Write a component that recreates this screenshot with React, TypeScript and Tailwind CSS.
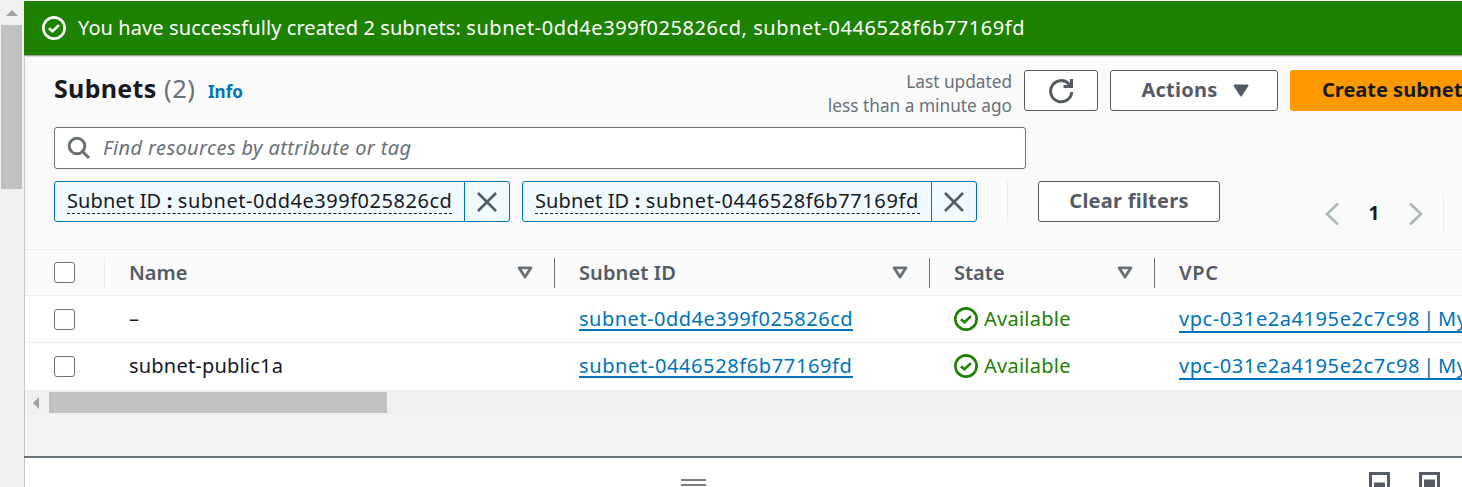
import React from "react";

function StatusOk({ className }: { className: string }) {
  return (
    <svg className={className} width="24" height="24" viewBox="0 0 16 16" fill="none" stroke="currentColor" strokeWidth="1.75">
      <circle cx="8" cy="8" r="7.1" />
      <path d="M4.6 8.1 7 10.2l4.3-4.1" />
    </svg>
  );
}

function Checkbox() {
  return <span className="block h-[21px] w-[21px] shrink-0 rounded-[3px] border border-[#687078] bg-white" />;
}

function Token({ label, value, className, valueClass }: { label: string; value: string; className: string; valueClass: string }) {
  return (
    <div className={`flex h-[41px] shrink-0 rounded-[3px] border border-[#0073bb] bg-[#f1faff] ${className}`}>
      <div className="flex-1 pl-3">
        <span className="mt-[5px] inline-block h-[27px] w-[385px] border-b border-dashed border-[#16191f] text-[20px] leading-[28px] tracking-[0.14px] whitespace-nowrap">
          {label} <b>:</b> <span className={valueClass}>{value}</span>
        </span>
      </div>
      <div className="flex w-[45px] items-center justify-center border-l border-[#0073bb] text-[#545b64]">
        <svg width="20" height="20" viewBox="0 0 20 20" stroke="currentColor" strokeWidth="2.6">
          <path d="m1 1 18 18M19 1 1 19" />
        </svg>
      </div>
    </div>
  );
}

function HeaderCell({ title, className, sortable = true }: { title: string; className: string; sortable?: boolean }) {
  return (
    <div className={`flex h-[30px] shrink-0 items-center text-[20px] font-semibold text-[#545b64] ${className}`}>
      <span className="flex-1">{title}</span>
      {sortable && (
        <svg className="mr-[21px]" width="16" height="13" viewBox="0 0 16 13" fill="none" stroke="#687078" strokeWidth="2.8" strokeLinejoin="round">
          <path d="M2 1.800h12L8 11Z" />
        </svg>
      )}
    </div>
  );
}

function Row({ name, id, className, idClass }: { name: string; id: string; className: string; idClass: string }) {
  return (
    <div className={`flex h-[47px] shrink-0 items-center bg-white pl-[29px] text-[20px] ${className}`}>
      <Checkbox />
      <span className="ml-[54px] w-[450px] shrink-0 tracking-[0.2px]">{name}</span>
      <span className="w-[375px] shrink-0">
        <a className={`inline-block h-[24px] border-b-2 border-[#0073bb] leading-[24px] text-[#0073bb] ${idClass}`}>{id}</a>
      </span>
      <span className="flex w-[225px] shrink-0 items-center gap-[6px] tracking-[0.25px] text-[#1d8102]">
        <StatusOk className="shrink-0" />
        Available
      </span>
      <a className="mt-[2px] inline-block h-[26px] border-b-2 border-[#0073bb] leading-[23px] tracking-[0.58px] whitespace-nowrap text-[#0073bb] [word-spacing:-2.5px]">
        vpc-031e2a4195e2c7c98 | My
      </a>
    </div>
  );
}

const button = "flex h-[41px] shrink-0 items-center justify-center rounded-[3px] border border-[#545b64] bg-white pb-[2px] text-[20px] font-bold tracking-[0.25px] text-[#545b64]";

export default function App() {
  return (
    <div className="flex h-[487px] w-[1462px] overflow-hidden bg-[#f0f0f0] font-['Noto_Sans',sans-serif] text-[#16191f]">
      <div className="w-6 shrink-0 pt-[10px]">
        <svg className="ml-[6px] block" width="12" height="6" viewBox="0 0 12 6">
          <path d="M0 6 6 0l6 6Z" fill="#a3a3a3" />
        </svg>
        <div className="mt-[9px] ml-px h-[164px] w-[21px] bg-[#c1c1c1]" />
      </div>

      <div className="flex w-[1438px] shrink-0 flex-col bg-[#fafafa] pt-px">
        <div className="flex h-[54px] shrink-0 items-center bg-[#1d8102] pl-[18px] text-[20px] text-white">
          <StatusOk className="shrink-0" />
          <span className="ml-3 tracking-[0.09px] whitespace-nowrap">
            You have successfully created 2 subnets:{" "}
            <span className="tracking-[0.55px]">subnet-0dd4e399f025826cd, subnet-0446528f6b77169fd</span>
          </span>
        </div>
        <div className="h-[2px] shrink-0 border-b border-[#dfe1e2] bg-[#9b9fa3]" />

        <div className="flex h-[399px] shrink-0 flex-col border-l border-[#c3c9cb]">
          <div className="flex h-[192px] shrink-0 flex-col pt-[13px] pl-[29px]">
            <div className="flex h-[41px] shrink-0">
              <h1 className="w-[110px] text-[25px] leading-[36px] font-bold tracking-[0.3px]">Subnets</h1>
              <span className="w-11 text-[25.500px] leading-[36px] tracking-[0.5px] text-[#687078]">(2)</span>
              <a className="text-[17px] leading-[43px] font-bold text-[#0073bb]">Info</a>
              <div className="ml-auto shrink-0 text-right text-[17.250px] leading-6 whitespace-nowrap text-[#687078]">
                Last updated
                <br />
                less than a minute ago
              </div>
              <div className={`${button} ml-3 w-[74px]`}>
                <svg className="mt-[2px]" width="26" height="26" viewBox="0 0 26 26" fill="none" stroke="currentColor" strokeWidth="3">
                  <path d="M23.800 14A10.600 10.600 0 1 1 20.600 5.600L23 8" />
                  <path d="M23.500 1v7.500h-8" />
                </svg>
              </div>
              <div className={`${button} ml-3 w-[168px] gap-[15px] pl-[2px]`}>
                <span>Actions</span>
                <svg className="mt-[2px]" width="16" height="13" viewBox="0 0 16 13">
                  <path d="M1.500 1.500h13L8 11.500Z" fill="currentColor" stroke="currentColor" strokeWidth="2" strokeLinejoin="round" />
                </svg>
              </div>
              <div className="ml-3 h-[41px] w-[172px] shrink-0 overflow-hidden rounded-l-[3px] bg-[#ff9900] pl-8 text-[20px] leading-[39px] font-bold whitespace-nowrap">
                Create subnet
              </div>
            </div>

            <div className="mt-4 flex h-[42px] w-[972px] shrink-0 items-center rounded-[3px] border border-[#687078] bg-white pl-3">
              <svg width="24" height="24" viewBox="0 0 24 24" fill="none" stroke="#687078" strokeWidth="3">
                <circle cx="10" cy="10" r="7.8" />
                <path d="m15.500 15.500 6.500 6.500" />
              </svg>
              <span className="ml-3 text-[20px] tracking-[0.4px] text-[#687078] italic">Find resources by attribute or tag</span>
            </div>

            <div className="mt-3 flex shrink-0">
              <Token label="Subnet ID" value="subnet-0dd4e399f025826cd" className="w-[456px]" valueClass="tracking-[0.52px]" />
              <Token label="Subnet ID" value="subnet-0446528f6b77169fd" className="ml-3 w-[455px]" valueClass="tracking-[0.6px]" />
              <div className="ml-[30px] h-[41px] w-px bg-[#eaeded]" />
              <div className={`${button} ml-[30px] w-[182px]`}>Clear filters</div>
              <div className="mt-3 ml-[105px] flex h-[41px] items-center">
                <svg width="14" height="24" viewBox="0 0 14 24" fill="none" stroke="#aab7b8" strokeWidth="2.6">
                  <path d="M13 1.500 2 12l11 10.500" />
                </svg>
                <span className="w-[70px] text-center text-[19px] font-bold">1</span>
                <svg width="14" height="24" viewBox="0 0 14 24" fill="none" stroke="#aab7b8" strokeWidth="2.6">
                  <path d="M1 1.500 12 12 1 22.500" />
                </svg>
                <div className="ml-5 h-[41px] w-px bg-[#eaeded]" />
              </div>
            </div>
          </div>

          <div className="flex h-[47px] shrink-0 items-center border-y border-[#eaeded] pl-[29px]">
            <Checkbox />
            <div className="ml-[29px] h-[30px] w-px shrink-0 bg-[#eaeded]" />
            <HeaderCell title="Name" className="w-[450px] border-r border-[#687078] pl-6" />
            <HeaderCell title="Subnet ID" className="w-[375px] border-r border-[#687078] pl-6 tracking-[0.1px]" />
            <HeaderCell title="State" className="w-[225px] border-r border-[#687078] pl-6" />
            <HeaderCell title="VPC" className="pl-6 tracking-[0.7px]" sortable={false} />
          </div>
          <Row name="–" id="subnet-0dd4e399f025826cd" className="border-b border-[#eaeded]" idClass="tracking-[0.5px]" />
          <Row name="subnet-public1a" id="subnet-0446528f6b77169fd" className="pb-px" idClass="tracking-[0.62px]" />

          <div className="flex h-[25px] shrink-0 items-center bg-[#f0f0f0] pl-2">
            <svg width="6" height="12" viewBox="0 0 6 12">
              <path d="M6 0 0 6l6 6Z" fill="#a3a3a3" />
            </svg>
            <div className="ml-[10px] h-[21px] w-[338px] bg-[#c1c1c1]" />
          </div>
          <div className="flex-1 bg-[#f2f3f3]" />
        </div>

        <div className="h-[2px] shrink-0 bg-[#687078]" />
        <div className="flex h-[29px] shrink-0 border-l border-[#c3c9cb] bg-white">
          <div className="mt-[21px] ml-[656px] h-[7px] w-[25px] border-y-2 border-[#7c8187]" />
          <svg className="mt-[14px] ml-[663px]" width="71" height="21" viewBox="0 0 71 21" fill="none" stroke="#545b64" strokeWidth="3">
            <path d="M1.500 1.500h18v18h-18zM51.500 1.500h18v18h-18z" />
            <path d="M5 10.500h11v8H5zM55 7.500h11v11H55z" fill="#545b64" stroke="none" />
          </svg>
        </div>
      </div>
    </div>
  );
}
